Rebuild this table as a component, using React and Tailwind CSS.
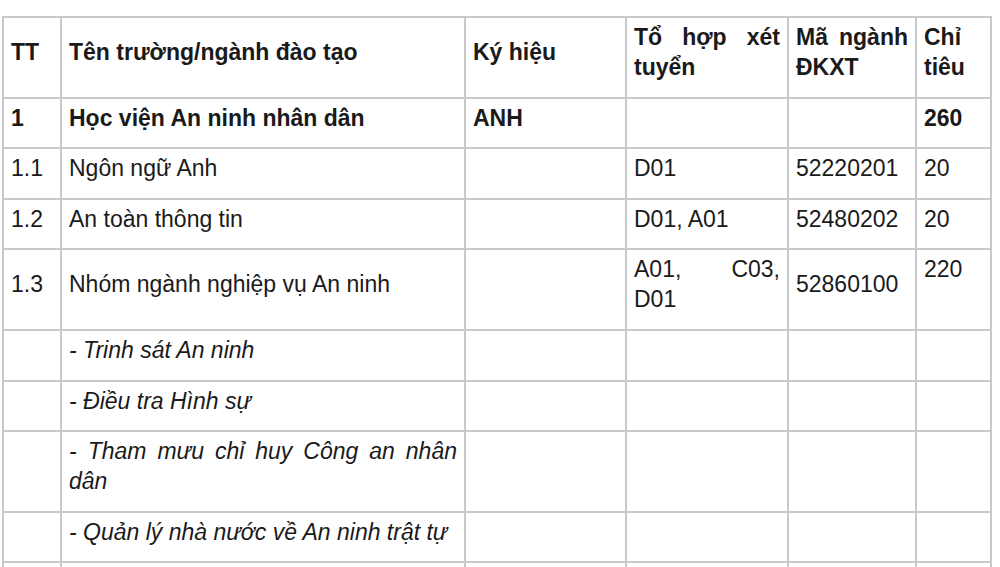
const rows = [
  { tt: '1', name: 'Học viện An ninh nhân dân', code: 'ANH', combo: '', major: '', quota: '260', bold: true },
  { tt: '1.1', name: 'Ngôn ngữ Anh', code: '', combo: 'D01', major: '52220201', quota: '20' },
  { tt: '1.2', name: 'An toàn thông tin', code: '', combo: 'D01, A01', major: '52480202', quota: '20' },
  { tt: '1.3', name: 'Nhóm ngành nghiệp vụ An ninh', code: '', combo: 'A01, C03, D01', major: '52860100', quota: '220', quotaTop: true },
  { tt: '', name: '- Trinh sát An ninh', italic: true },
  { tt: '', name: '- Điều tra Hình sự', italic: true },
  { tt: '', name: '- Tham mưu chỉ huy Công an nhân dân', italic: true },
  { tt: '', name: '- Quản lý nhà nước về An ninh trật tự', italic: true },
  { tt: '', name: '\u00a0', italic: true },
]

const cell = 'border-2 border-[#c9c9c9] pl-[7px] pr-[7px] pt-[4px] pb-[14.6px] align-middle text-justify'

export default function App() {
  return (
    <div
      className="h-[567px] overflow-hidden bg-white pt-[16px] pl-[2px] text-[#1a1a1a] text-[23px] leading-[30px]"
      style={{ fontFamily: '"Liberation Sans", Arial, sans-serif' }}
    >
      <table className="table-fixed border-collapse w-[988px]">
        <colgroup>
          <col className="w-[58px]" />
          <col className="w-[404px]" />
          <col className="w-[161px]" />
          <col className="w-[162px]" />
          <col className="w-[128px]" />
          <col className="w-[75px]" />
        </colgroup>
        <thead>
          <tr className="font-bold">
            <td className={cell}>TT</td>
            <td className={cell}>Tên trường/ngành đào tạo</td>
            <td className={cell}>Ký hiệu</td>
            <td className={cell}>Tổ hợp xét tuyển</td>
            <td className={cell}>Mã ngành ĐKXT</td>
            <td className={cell}>Chỉ tiêu</td>
          </tr>
        </thead>
        <tbody>
          {rows.map((r, i) => (
            <tr key={i} className={r.bold ? 'font-bold' : ''}>
              <td className={cell}>{r.tt}</td>
              <td className={`${cell} ${r.italic ? 'italic' : ''}`}>{r.name}</td>
              <td className={cell}>{r.code}</td>
              <td className={cell}>{r.combo}</td>
              <td className={cell}>{r.major}</td>
              <td className={r.quotaTop ? `${cell} !align-top` : cell}>{r.quota}</td>
            </tr>
          ))}
        </tbody>
      </table>
    </div>
  )
}
